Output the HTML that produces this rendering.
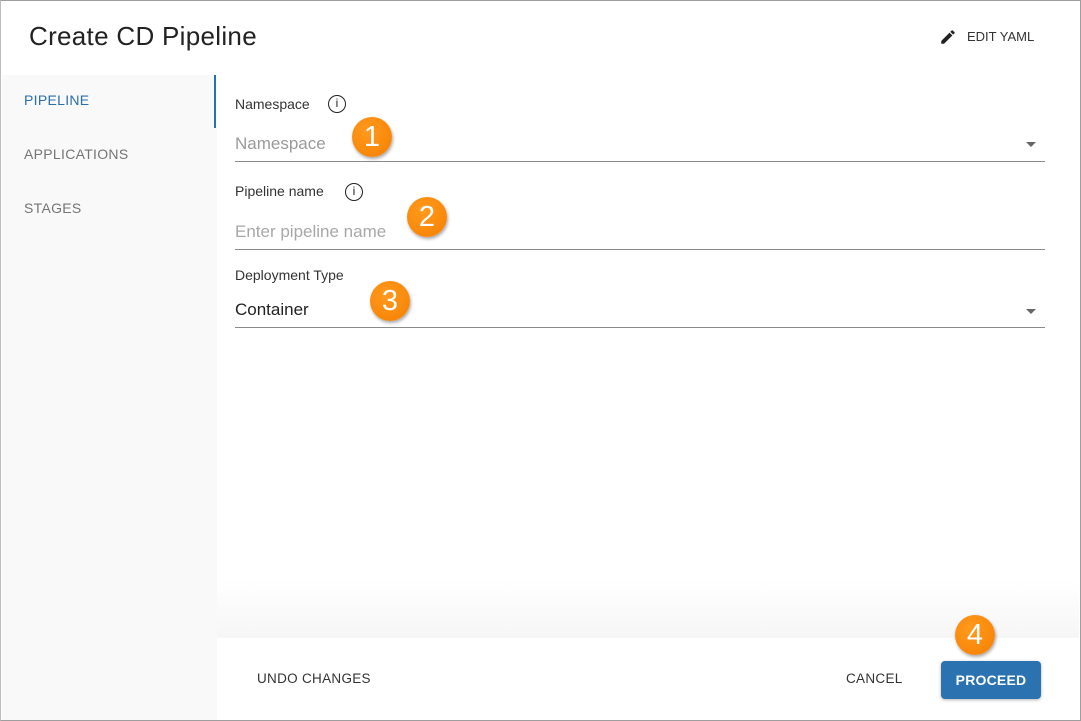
<!DOCTYPE html>
<html><head><style>
*{margin:0;padding:0;box-sizing:border-box}
body{width:1081px;height:721px;background:#fff;font-family:"Liberation Sans",sans-serif;position:relative;overflow:hidden}
.frame{position:absolute;left:0;top:0;width:1081px;height:721px;border:1px solid #9e9e9e;border-left-color:#bdbdbd}
.side{position:absolute;left:2px;top:75px;width:215px;height:645px;background:#f9f9f9}
.ind{position:absolute;left:214px;top:75px;width:2px;height:53px;background:#2a6fad}
.nav{position:absolute;left:24px;font-size:14px;color:#757575;letter-spacing:.3px}
.t{position:absolute;white-space:nowrap}
.lbl{font-size:14px;color:#333}
.line{position:absolute;left:235px;width:810px;height:1px;background:#8a8a8a}
.caret{position:absolute;left:1026px;width:0;height:0;border-left:5px solid transparent;border-right:5px solid transparent;border-top:5px solid #666}
.info{position:absolute;width:18px;height:18px;border:1.5px solid #222;border-radius:50%;font-size:12px;text-align:center;line-height:15px;color:#222}
.badge{position:absolute;width:40px;height:40px;border-radius:50%;background:radial-gradient(circle at 40% 35%,#ff9a1e,#f57f00);color:#fff;font-size:29px;text-align:center;line-height:40px;box-shadow:1px 2px 3px rgba(0,0,0,.35)}
.shade{position:absolute;left:217px;top:580px;width:862px;height:58px;background:linear-gradient(#fff,#f6f6f6)}
.foot{position:absolute;left:217px;top:638px;width:846px;height:82px;background:#fff}
.btn{position:absolute;left:941px;top:661px;width:100px;height:38px;background:#2a72b0;border-radius:4px;color:#fff;font-size:14px;font-weight:bold;text-align:center;line-height:38px;box-shadow:0 1px 3px rgba(0,0,0,.3);letter-spacing:.2px}
</style></head><body>
<div class="frame"></div>
<div class="t" style="left:29px;top:21px;font-size:26px;color:#222;letter-spacing:.3px">Create CD Pipeline</div>
<svg style="position:absolute;left:939px;top:28px" width="18" height="18" viewBox="0 0 24 24"><path d="M3 17.25V21h3.75L17.8 9.94l-3.75-3.75L3 17.25zM20.7 7.04a1 1 0 000-1.41l-2.34-2.34a1 1 0 00-1.41 0l-1.83 1.83 3.75 3.75 1.83-1.83z" fill="#222"/></svg>
<div class="t" style="left:967px;top:29px;font-size:13px;color:#333">EDIT YAML</div>
<div class="side"></div><div class="ind"></div>
<div class="nav" style="top:92px;color:#2a6fad">PIPELINE</div>
<div class="nav" style="top:146px">APPLICATIONS</div>
<div class="nav" style="top:200px">STAGES</div>

<div class="t lbl" style="left:235px;top:96px">Namespace</div>
<div class="info" style="left:328px;top:95px">i</div>
<div class="t" style="left:235px;top:134px;font-size:17px;color:#9a9a9a">Namespace</div>
<div class="caret" style="top:142px"></div>
<div class="line" style="top:161px"></div>
<div class="badge" style="left:352px;top:117px">1</div>

<div class="t lbl" style="left:235px;top:183px">Pipeline name</div>
<div class="info" style="left:345px;top:183px">i</div>
<div class="t" style="left:235px;top:222px;font-size:17px;color:#a8a8a8">Enter pipeline name</div>
<div class="line" style="top:249px"></div>
<div class="badge" style="left:407px;top:197px">2</div>

<div class="t lbl" style="left:235px;top:267px">Deployment Type</div>
<div class="t" style="left:235px;top:300px;font-size:17px;color:#222">Container</div>
<div class="caret" style="top:309px"></div>
<div class="line" style="top:327px"></div>
<div class="badge" style="left:370px;top:281px">3</div>

<div class="shade"></div><div class="foot"></div>
<div class="t" style="left:257px;top:671px;font-size:13.5px;color:#333;letter-spacing:.3px">UNDO CHANGES</div>
<div class="t" style="left:846px;top:671px;font-size:13.5px;color:#333;letter-spacing:.3px">CANCEL</div>
<div class="btn">PROCEED</div>
<div class="badge" style="left:955px;top:615px">4</div>
</body></html>
